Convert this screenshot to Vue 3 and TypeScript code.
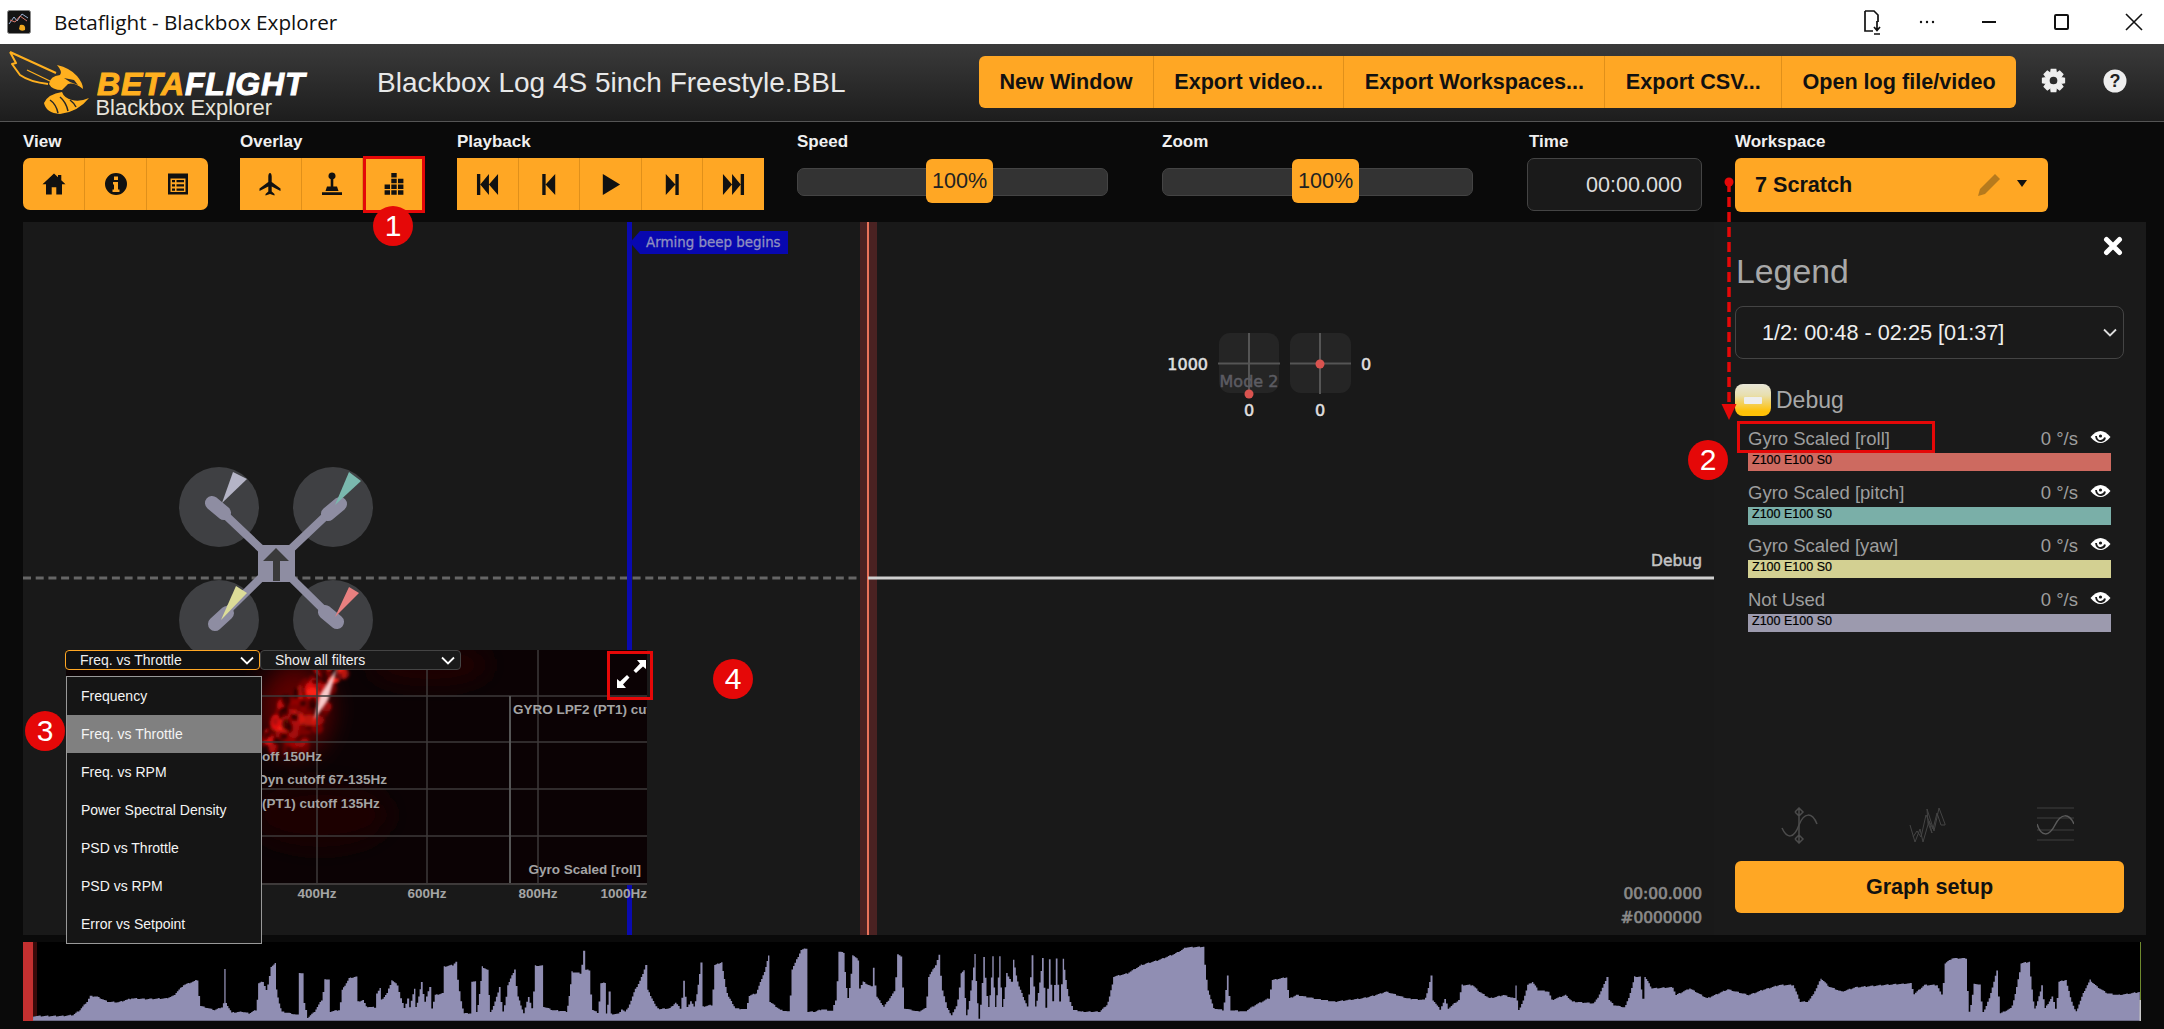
<script setup lang="ts">
const icons: Record<string, string> = {
  home: 'M12 1.500 L16 5.200 V3 H19.300 V8.200 L23.500 12.200 H20 V22.500 H14.300 V15.300 H9.700 V22.500 H4 V12.200 H0.500 Z',
  info: 'M12 1a11 11 0 1 0 0 22a11 11 0 0 0 0-22Z M10 4.500h4v3.500h-4Z M9 10h5v7.500h1.500v2.500h-7v-2.500H10v-5H9Z',
  list: 'M2 1.500h20v21H2Z M4.500 6.500v13.500h15V6.500Z M6 8h3v2.300H6Z M10.500 8H18v2.300h-7.500Z M6 12.200h3v2.300H6Z M10.500 12.200H18v2.300h-7.500Z M6 16.400h3v2.300H6Z M10.500 16.400H18v2.300h-7.500Z',
  plane: 'M12 1C13 1 13.700 2.800 13.700 4.500V10L22.500 16.500V19L13.700 14.500V19.500L16.500 22V23.500L12 22L7.500 23.500V22L10.300 19.500V14.500L1.500 19V16.500L10.300 10V4.500C10.300 2.800 11 1 12 1Z',
  joystick: 'M12 0.500a3.500 3.500 0 0 1 1.300 6.750V14.500h3.700L18.500 19H5.500L7 14.500h3.700V7.250A3.500 3.500 0 0 1 12 0.500Z M2 20.300h20V23H2Z',
  grid: 'M9.300 1h5.400v4.500H9.300Z M9.300 6.700h5.400v4.500H9.300Z M16 6.700h5.400v4.500H16Z M2.600 12.500h5.400V17H2.600Z M9.300 12.500h5.400V17H9.300Z M16 12.500h5.400V17H16Z M2.600 18.300h5.400v4.500H2.600Z M9.300 18.300h5.400v4.500H9.300Z M16 18.300h5.400v4.500H16Z',
  first: 'M1 1h3.500v22H1Z M4.500 12 13.500 1v22Z M13.500 12 23 1v22Z',
  prev: 'M5.500 1h3.500v22H5.500Z M9 12 19 1v22Z',
  play: 'M4 1 L22 12 L4 23Z',
  next: 'M15 1h3.500v22H15Z M15 12 5 1v22Z',
  last: 'M19.500 1H23v22h-3.500Z M19.500 12 10.500 1v22Z M10.500 12 1 1v22Z'
}

const views = ['home', 'info', 'list']
const overlays = ['plane', 'joystick', 'grid']
const playback = ['first', 'prev', 'play', 'next', 'last']
const headerButtons = ['New Window', 'Export video...', 'Export Workspaces...', 'Export CSV...', 'Open log file/video']

function gearPath(): string {
  const pts: string[] = []
  const teeth = 8
  for (let i = 0; i < teeth; i++) {
    const a = (i / teeth) * Math.PI * 2
    const w = 0.24
    const steps: [number, number][] = [
      [8.2, a - 0.42], [11.5, a - w], [11.5, a + w], [8.2, a + 0.42]
    ]
    for (const [r, t] of steps) {
      pts.push(`${(12 + r * Math.cos(t)).toFixed(2)} ${(12 + r * Math.sin(t)).toFixed(2)}`)
    }
  }
  return `M${pts.join('L')}Z M12 8.300a3.700 3.700 0 1 0 0 7.400a3.700 3.700 0 0 0 0-7.400Z`
}
const gear = gearPath()

const rows = [
  { name: 'Gyro Scaled [roll]', color: '#cd6a60' },
  { name: 'Gyro Scaled [pitch]', color: '#7aafa8' },
  { name: 'Gyro Scaled [yaw]', color: '#d3d092' },
  { name: 'Not Used', color: '#9c9aae' }
]

const menu = ['Frequency', 'Freq. vs Throttle', 'Freq. vs RPM', 'Power Spectral Density', 'PSD vs Throttle', 'PSD vs RPM', 'Error vs Setpoint']

const traceA = [48,258,90,258,105,255,115,240,125,215,130,198,140,200,155,215,170,217,190,205,210,207,240,205,250,198,265,165,285,150,290,228,310,240,320,232,323,220,325,118,327,220,335,248,350,245,360,250,370,240,374,160,380,155,385,180,392,110,398,100,400,180,408,245,420,250,430,255,433,128,438,130,440,220,445,263,455,245,465,210,470,148,475,150,478,245,490,240,495,180,505,145,515,140,518,215,525,210,530,230,542,232,545,190,550,175,552,210,560,190,567,150,575,165,580,205,585,235,590,205,593,232,600,175,602,230,610,155,615,215,622,170,625,235,630,195,640,190,643,110,655,105,660,95,665,185,672,250,680,250,683,155,688,155,690,245,698,110,706,120,710,245,723,170,728,245,735,165,745,118,750,200,758,250,765,200,770,235,775,107,785,107,787,230,800,240,820,245,828,125,840,130,845,62,848,120,853,120,858,240,865,248,870,160,876,158,878,250,882,185,885,252,895,252,900,238,905,245,920,175,935,105,938,180,950,230,955,237,970,235,978,218,985,235,990,152,995,232,1000,213,1005,230,1015,98,1018,230,1030,225,1035,105,1045,97,1055,200,1065,235,1080,238,1085,197,1095,190,1105,135,1113,75,1115,215,1130,240,1142,245,1147,118,1160,60,1167,55,1170,245,1180,245,1190,238,1205,243,1210,210,1215,65,1222,68,1228,205,1235,75,1243,90,1245,175,1250,155,1262,170,1265,112,1270,200,1280,230,1295,185,1300,72,1305,80,1310,235,1330,245,1340,235,1345,140,1355,105,1360,75,1365,180,1372,235,1378,255,1385,230,1392,130,1396,122,1400,255,1412,72,1418,265,1425,82,1432,230,1438,80,1442,230,1448,80,1452,230,1458,130,1465,155,1468,90,1478,180,1488,230,1495,75,1500,230,1510,85,1515,232,1520,88,1525,215,1530,85,1535,215,1540,85,1550,215,1555,240,1568,245]
const traceB = [0,245,25,245,35,225,45,140,65,130,85,105,110,90,135,70,150,52,175,50,182,180,190,235,203,240,210,137,215,240,235,245,250,225,270,205,275,150,295,142,300,205,310,195,340,207,365,215,405,205,420,198,440,185,470,205,495,210,505,138,508,210,518,238,525,208,530,235,545,210,550,165,565,165,575,185,590,205,610,195,625,205,628,165,632,240,645,165,652,155,660,180,675,185,680,210,700,195,710,215,740,220,760,140,763,210,770,225,785,232,800,140,808,140,812,205,815,140,825,175,855,172,860,195,880,175,905,205,935,178,965,195,985,180,1010,165,1030,165,1040,215,1050,215,1070,145,1082,170,1100,185,1120,172,1160,165,1200,160,1205,192,1220,165,1238,165,1245,195,1250,100,1260,85,1280,85,1285,245,1292,160,1300,165,1305,245,1325,120,1330,250,1345,235,1360,100,1372,95,1380,235,1390,165,1395,235,1405,200,1410,235,1415,155,1425,150,1440,245,1450,190,1460,150,1470,170,1485,190,1500,195,1520,190,1533,185]

function buildTrace(): string {
  const s = 1082 / 1568
  const p: [number, number][] = []
  for (let i = 0; i < traceA.length; i += 2) p.push([traceA[i] * s, traceA[i + 1] / 3 + 930])
  for (let i = 0; i < traceB.length; i += 2) p.push([1082 + traceB[i] * s, traceB[i + 1] / 3 + 930])
  const out: string[] = ['33 1020.700']
  let count = 0
  for (let i = 0; i < p.length - 1; i++) {
    const [x0, y0] = p[i]
    const [x1, y1] = p[i + 1]
    const dx = x1 - x0
    const dy = y1 - y0
    const n = Math.max(1, Math.round(dx / 1.5))
    for (let k = 0; k < n; k++) {
      const t = k / n
      let e = t
      if (Math.abs(dy) >= 20) e = dy < 0 ? Math.pow(t, 1.35) : 1 - Math.pow(1 - t, 1.35)
      count++
      const wobble = (((count * 7919) % 5) - 2) * 0.22
      const y = Math.min(1020.7, y0 + dy * e + wobble)
      const xa = x0 + dx * t
      const xb = xa + dx / n
      out.push(`${xa.toFixed(1)} ${y.toFixed(1)}`, `${xb.toFixed(1)} ${y.toFixed(1)}`)
    }
  }
  out.push('2140 1020.700')
  return out.join(' ')
}
const tracePoints = buildTrace()

interface Blot { x: number; y: number; rx: number; ry: number; fill: string; op: number }
function buildBlots(): Blot[] {
  let seed = 4242
  const rnd = () => {
    seed = (seed * 16807) % 2147483647
    return seed / 2147483647
  }
  const out: Blot[] = []
  const reds = ['#e01010', '#a80808', '#ff2418', '#7c0606']
  for (let i = 0; i < 90; i++) {
    const t = rnd()
    const spread = 32 * (1 - t * 0.72)
    const x = 272 + t * 76 + (rnd() - 0.5) * spread * 2
    const y = 752 - t * 104 + (rnd() - 0.5) * 16
    out.push({ x, y, rx: 2 + rnd() * 5, ry: 2.500 + rnd() * 6, fill: reds[Math.floor(rnd() * reds.length)], op: 0.45 + rnd() * 0.55 })
  }
  for (let i = 0; i < 22; i++) {
    const t = rnd()
    out.push({ x: 266 + t * 70 + (rnd() - 0.5) * 30, y: 745 - t * 90, rx: 2 + rnd() * 3, ry: 2 + rnd() * 4, fill: '#1c0000', op: 0.7 })
  }
  return out
}
const blots = buildBlots()
</script>

<template>
  <div class="page">
    <div class="titlebar">
      <svg class="app-icon" viewBox="0 0 24 24">
        <rect x="0.500" y="0.500" width="23" height="23" rx="2" fill="#141414" stroke="#888" />
        <path d="M2 14 L7 7 L10 11 L15 4 L21 8" fill="none" stroke="#9fb4d8" stroke-width="1" />
        <path d="M3 10 L8 12 L13 6 L20 11" fill="none" stroke="#d8786a" stroke-width="1" />
        <path d="M13 15 Q19 14 18 20 Q14 22 12 19 Z" fill="#f2a91f" />
      </svg>
      <span class="app-title">Betaflight - Blackbox Explorer</span>
      <div class="win-controls">
        <svg class="win-doc" viewBox="0 0 20 26" width="20" height="26">
          <path d="M3 2h9l4 4v7M3 2v20h8" fill="none" stroke="#111" stroke-width="1.700" />
          <path d="M15 12v9M12 18l3 3.500 3-3.500M12 25h6" fill="none" stroke="#111" stroke-width="1.700" />
        </svg>
        <svg class="win-dots" viewBox="0 0 16 4" width="16" height="4">
          <circle cx="2" cy="2" r="1.200" fill="#111" /><circle cx="8" cy="2" r="1.200" fill="#111" /><circle cx="14" cy="2" r="1.200" fill="#111" />
        </svg>
        <span class="win-min"></span>
        <span class="win-max"></span>
        <svg class="win-close" viewBox="0 0 18 18" width="18" height="18">
          <path d="M1 1L17 17M17 1L1 17" stroke="#111" stroke-width="1.600" />
        </svg>
      </div>
    </div>

    <header class="header">
      <svg class="logo" viewBox="0 44 340 78" width="340" height="78">
        <g fill="none" stroke="#ffb01f" stroke-width="2" stroke-linejoin="round">
          <path d="M10 52 L56 73 M10 52 L16 63 L12 64 L20 75 Q30 82 48 84" />
          <path d="M27 70 L52 82" stroke-width="1.300" />
        </g>
        <path d="M57 65 Q70 68 77 76 Q83 83 83 89 Q74 82 68 84 L62 90 Q52 90 49 84 Q50 76 60 75 Q63 72 57 65Z" fill="#ffb01f" />
        <path d="M64 78 L74 80 L78 85 L70 82 Z" fill="#2a2a2a" />
        <path d="M62 92 Q48 94 44 103 Q46 113 60 114 Q78 112 89 98 Q80 102 72 100 Q64 98 62 92Z" fill="#ffb01f" />
        <path d="M50 100 Q56 104 58 113 M60 97 Q66 102 68 111 M70 100 Q74 103 76 107" fill="none" stroke="#262626" stroke-width="1.500" />
        <text x="97" y="95" class="logo-word"><tspan fill="#ffb01f">BETA</tspan><tspan fill="#fff">FLIGHT</tspan></text>
        <text x="95.500" y="115" class="logo-sub">Blackbox Explorer</text>
      </svg>
      <h1 class="log-title">Blackbox Log 4S 5inch Freestyle.BBL</h1>
      <div class="header-buttons">
        <button v-for="b in headerButtons" :key="b" class="header-btn">{{ b }}</button>
      </div>
      <svg class="gear" viewBox="0 0 24 24" width="25" height="25"><path :d="gear" fill="#eee" fill-rule="evenodd" /></svg>
      <svg class="help" viewBox="0 0 24 24" width="24" height="24">
        <circle cx="12" cy="12" r="11.500" fill="#eee" />
        <text x="12" y="18" text-anchor="middle" class="help-mark">?</text>
      </svg>
    </header>

    <section class="toolbar">
      <div class="tool view-tool">
        <label class="tool-label">View</label>
        <div class="btn-group rounded">
          <button v-for="i in views" :key="i" class="icon-btn">
            <svg viewBox="0 0 24 24" width="24" height="24"><path :d="icons[i]" fill="#111" fill-rule="evenodd" /></svg>
          </button>
        </div>
      </div>
      <div class="tool overlay-tool">
        <label class="tool-label">Overlay</label>
        <div class="btn-group">
          <button v-for="i in overlays" :key="i" class="icon-btn">
            <svg viewBox="0 0 24 24" width="24" height="24"><path :d="icons[i]" fill="#111" fill-rule="evenodd" /></svg>
          </button>
        </div>
      </div>
      <div class="tool playback-tool">
        <label class="tool-label">Playback</label>
        <div class="btn-group">
          <button v-for="i in playback" :key="i" class="icon-btn">
            <svg viewBox="0 0 24 24" width="23" height="23"><path :d="icons[i]" fill="#111" fill-rule="evenodd" /></svg>
          </button>
        </div>
      </div>
      <div class="tool slider-tool speed-tool">
        <label class="tool-label">Speed</label>
        <div class="slider"><span class="slider-handle">100%</span></div>
      </div>
      <div class="tool slider-tool zoom-tool">
        <label class="tool-label">Zoom</label>
        <div class="slider"><span class="slider-handle">100%</span></div>
      </div>
      <div class="tool time-tool">
        <label class="tool-label time-label">Time</label>
        <div class="time-box">00:00.000</div>
      </div>
      <div class="tool workspace-tool">
        <label class="tool-label">Workspace</label>
        <div class="workspace-btn">
          <span class="ws-name">7 Scratch</span>
          <svg class="ws-pencil" viewBox="0 0 24 24" width="24" height="24">
            <path d="M18 1 L23 6 L8 21 L1 23 L3 16 Z" fill="#b67a1d" />
          </svg>
          <span class="ws-caret"></span>
        </div>
      </div>
    </section>

    <main class="main">
      <div class="stage">
        <svg class="stage-svg" viewBox="23 222 1691 713" width="1691" height="713">
          <line x1="23" y1="578" x2="860" y2="578" stroke="#666" stroke-width="3" stroke-dasharray="8 4.700" />
          <rect x="860" y="222" width="17" height="713" fill="#4a2222" />
          <rect x="867" y="222" width="2" height="713" fill="#e8735a" />
          <line x1="868" y1="578" x2="1714" y2="578" stroke="#cfcfcf" stroke-width="3" />
          <text x="1702" y="566" text-anchor="end" class="stage-label dim">Debug</text>

          <rect x="627" y="222" width="5" height="713" fill="#0a0ab0" />
          <path d="M630 242.500 L640 231 H788 V254 H640 Z" fill="#0808b0" />
          <text x="646" y="247" class="beep-label">Arming beep begins</text>

          <!-- craft -->
          <g fill="#3f4043">
            <circle cx="219" cy="507" r="40" /><circle cx="333" cy="507" r="40" />
            <circle cx="219" cy="620" r="40" /><circle cx="333" cy="620" r="40" />
          </g>
          <g stroke="#8e8da2" stroke-linecap="round">
            <path d="M218 508 L276 563 L334 508 M218 620 L276 563 L334 620" fill="none" stroke-width="8" />
            <path d="M212 503 L224 513 M340 504 L328 514 M215 624 L227 613 M337 622 L325 612" stroke-width="14" />
          </g>
          <rect x="258" y="545" width="37" height="37" fill="#8e8da2" />
          <path d="M276 548 L289 561 H280 V581 H273 V561 H263 Z" fill="#3a3a3a" />
          <path d="M222 503 L233 472 L247 479 Z" fill="#b4b4c6" />
          <path d="M335 505 L349 472 L361 481 Z" fill="#7ab8ae" />
          <path d="M221 620 L236 586 L247 593 Z" fill="#dcdc98" />
          <path d="M335 617 L349 587 L359 593 Z" fill="#e88080" />

          <!-- sticks -->
          <rect x="1219" y="333" width="60" height="60" rx="11" fill="#252525" />
          <rect x="1290" y="333" width="61" height="60" rx="11" fill="#252525" />
          <g stroke="#555" stroke-width="2">
            <line x1="1218" y1="363.500" x2="1280" y2="363.500" /><line x1="1249" y1="333" x2="1249" y2="394" />
            <line x1="1290" y1="363.500" x2="1351" y2="363.500" /><line x1="1320" y1="333" x2="1320" y2="394" />
          </g>
          <text x="1249" y="387" text-anchor="middle" class="stage-label mode">Mode 2</text>
          <circle cx="1249" cy="394" r="4.500" fill="#d9534f" />
          <circle cx="1320" cy="364" r="4.500" fill="#d9534f" />
          <text x="1208" y="370" text-anchor="end" class="stage-label">1000</text>
          <text x="1366" y="370" text-anchor="middle" class="stage-label">0</text>
          <text x="1249" y="416" text-anchor="middle" class="stage-label">0</text>
          <text x="1320" y="416" text-anchor="middle" class="stage-label">0</text>

          <text x="1702" y="899" text-anchor="end" class="stage-label time">00:00.000</text>
          <text x="1702" y="923" text-anchor="end" class="stage-label time">#0000000</text>

          <!-- analyser -->
          <defs>
            <filter id="blurL" x="-50%" y="-50%" width="200%" height="200%"><feGaussianBlur stdDeviation="12" /></filter>
            <filter id="blurM" x="-50%" y="-50%" width="200%" height="200%"><feGaussianBlur stdDeviation="4" /></filter>
            <filter id="blurS" x="-20%" y="-20%" width="140%" height="140%"><feGaussianBlur stdDeviation="1.500" /></filter>
            <clipPath id="spectrum"><rect x="66" y="650" width="581" height="233" /></clipPath>
          </defs>
          <g clip-path="url(#spectrum)">
            <rect x="66" y="650" width="581" height="233" fill="#0b0204" />
            <ellipse cx="295" cy="710" rx="36" ry="46" fill="#5c0000" filter="url(#blurL)" />
            <ellipse cx="320" cy="815" rx="70" ry="32" fill="#1f0000" filter="url(#blurL)" />
            <ellipse cx="430" cy="665" rx="60" ry="18" fill="#200000" filter="url(#blurL)" />
            <g filter="url(#blurS)">
              <ellipse v-for="(b, i) in blots" :key="i" :cx="b.x" :cy="b.y" :rx="b.rx" :ry="b.ry" :fill="b.fill" :opacity="b.op" />
            </g>
            <path d="M314 720 L320 695 L337 668 L328 700 Z" fill="#f8caca" filter="url(#blurS)" />
            <g stroke="#3e3a3a" stroke-width="1.500">
              <line x1="262" y1="696" x2="647" y2="696" /><line x1="262" y1="742" x2="647" y2="742" />
              <line x1="262" y1="789" x2="647" y2="789" /><line x1="262" y1="836" x2="647" y2="836" />
              <line x1="317" y1="650" x2="317" y2="883" /><line x1="427" y1="650" x2="427" y2="883" />
              <line x1="538" y1="650" x2="538" y2="883" />
            </g>
            <line x1="510" y1="696" x2="510" y2="883" stroke="#555" stroke-width="2" />
            <text x="513" y="714" class="spec-label">GYRO LPF2 (PT1) cutoff</text>
            <text x="262" y="761" class="spec-label">off 150Hz</text>
            <text x="258" y="784" class="spec-label">Dyn cutoff 67-135Hz</text>
            <text x="262" y="808" class="spec-label">(PT1) cutoff 135Hz</text>
            <text x="641" y="874" text-anchor="end" class="spec-label">Gyro Scaled [roll]</text>
          </g>
          <rect x="66" y="883" width="581" height="2" fill="#3e3a3a" />
          <rect x="627" y="885" width="5" height="50" fill="#0a0ab0" />
          <text x="317" y="898" text-anchor="middle" class="spec-label">400Hz</text>
          <text x="427" y="898" text-anchor="middle" class="spec-label">600Hz</text>
          <text x="538" y="898" text-anchor="middle" class="spec-label">800Hz</text>
          <text x="647" y="898" text-anchor="end" class="spec-label">1000Hz</text>
          <path d="M637 660 H646 V669 L643 666.500 L636 673 L633.500 670.500 L640 663.500 Z M617 688 V679 L620 681.500 L627 675 L629.500 677.500 L623 684.500 L626 688 Z" fill="#fff" />
        </svg>

        <div class="spec-selects">
          <div class="spec-select active">
            <span>Freq. vs Throttle</span>
            <svg viewBox="0 0 14 9" width="14" height="9"><path d="M1 1.500L7 7.500L13 1.500" fill="none" stroke="#fff" stroke-width="1.800" /></svg>
          </div>
          <div class="spec-select">
            <span>Show all filters</span>
            <svg viewBox="0 0 14 9" width="14" height="9"><path d="M1 1.500L7 7.500L13 1.500" fill="none" stroke="#fff" stroke-width="1.800" /></svg>
          </div>
        </div>
        <ul class="spec-menu">
          <li v-for="m in menu" :key="m" class="spec-item" :class="{ selected: m === 'Freq. vs Throttle' }">{{ m }}</li>
        </ul>
      </div>

      <aside class="legend">
        <svg class="legend-close" viewBox="0 0 20 20" width="20" height="20">
          <path d="M3.500 3.500L16.500 16.500M16.500 3.500L3.500 16.500" stroke="#fff" stroke-width="5" stroke-linecap="round" />
        </svg>
        <h2 class="legend-title">Legend</h2>
        <div class="legend-select">
          <span>1/2: 00:48 - 02:25 [01:37]</span>
          <svg viewBox="0 0 14 9" width="14" height="9"><path d="M1 1.500L7 7.500L13 1.500" fill="none" stroke="#ddd" stroke-width="1.800" /></svg>
        </div>
        <div class="legend-group">
          <span class="group-icon"><span class="group-icon-bar"></span></span>
          <span class="group-name">Debug</span>
        </div>
        <div class="legend-rows">
          <div v-for="r in rows" :key="r.name" class="legend-row">
            <div class="row-head">
              <span class="row-name">{{ r.name }}</span>
              <span class="row-value">0 °/s</span>
              <svg class="row-eye" viewBox="0 0 21 14" width="21" height="14">
                <path d="M0.500 7 Q10.500 -5 20.500 7 Q10.500 19 0.500 7Z" fill="#fff" />
                <path d="M6 6 Q6.500 11 11 11 Q14.500 10.500 15 7.500" fill="none" stroke="#191919" stroke-width="1.800" />
                <circle cx="10.500" cy="6" r="1.600" fill="#191919" />
              </svg>
            </div>
            <div class="row-bar" :style="{ background: r.color }">Z100 E100 S0</div>
          </div>
        </div>
        <div class="legend-tools">
          <svg viewBox="0 0 37 37" width="37" height="37" fill="none" stroke="#4c4c4c" stroke-width="1.500">
            <path d="M1 21 C6 32 13 32 18 18 C23 5 31 5 36 17" />
            <path d="M18 1V36 M14 5L18 1L22 5L18 9L14 5 M14 32L18 36L22 32L18 28L14 32" />
          </svg>
          <svg viewBox="0 0 37 37" width="37" height="37" fill="none" stroke="#444" stroke-width="1">
            <path d="M1 18 L6 35 L11 22 L14 35 L20 14 L23 26 L19 16 L18 2 L25 24 L30 1 L36 17 L36 18 L32 18 L28 6 L24 22 L17 8 L12 30 L8 24 L4 30" />
          </svg>
          <svg viewBox="0 0 37 37" width="37" height="37" fill="none" stroke="#3f3f3f" stroke-width="1.200">
            <path d="M0 1H37 M0 11H37 M0 23H37 M0 33H37" />
            <path d="M0 17 C4 30 12 30 18 18 C24 6 32 6 37 17" stroke="#5a5a5a" stroke-width="1.500" />
          </svg>
        </div>
        <button class="graph-setup">Graph setup</button>
      </aside>
    </main>

    <div class="seek">
      <svg viewBox="23 942 2118 79" width="2118" height="79">
        <polygon :points="tracePoints" fill="#908eb3" />
        <rect x="23" y="942" width="10" height="79" fill="#c43030" />
        <rect x="33" y="942" width="4" height="74" fill="#3a0a0a" />
        <rect x="2140" y="942" width="1.500" height="58" fill="#6f8a2e" />
        <rect x="2139.500" y="1000" width="1.500" height="21" fill="#c8c8c8" />
      </svg>
    </div>

    <!-- annotations -->
    <svg class="notes" viewBox="0 0 2164 1029" width="2164" height="1029">
      <circle cx="1729" cy="182" r="4.500" fill="#e50808" />
      <line x1="1729" y1="182" x2="1729" y2="406" stroke="#e50808" stroke-width="3.500" stroke-dasharray="10 5" />
      <path d="M1721.500 404 H1736.500 L1729 420 Z" fill="#e50808" />
    </svg>
    <div class="note-box box-1"></div>
    <div class="note-box box-2"></div>
    <div class="note-box box-4"></div>
    <span class="badge badge-1">1</span>
    <span class="badge badge-2">2</span>
    <span class="badge badge-3">3</span>
    <span class="badge badge-4">4</span>
  </div>
</template>

<style scoped>
.page {
  position: relative;
  width: 2164px;
  height: 1029px;
  overflow: hidden;
  background: #0a0a0a;
  display: flex;
  flex-direction: column;
  font-family: "Liberation Sans", Arial, sans-serif;
  color: #eee;
}

.titlebar {
  height: 44px;
  flex: none;
  display: flex;
  align-items: center;
  background: #fff;
  padding-left: 7px;
}
.app-icon { width: 24px; height: 24px; margin-right: 23px; }
.app-title {
  font-family: "Open Sans", sans-serif;
  font-size: 20.700px;
  color: #111;
}
.win-controls {
  margin-left: auto;
  width: 310px;
  height: 44px;
  display: flex;
  align-items: center;
}
.win-doc { margin-left: 8px; }
.win-dots { margin-left: 37px; }
.win-min { width: 14px; height: 2px; background: #111; margin-left: 47px; }
.win-max { width: 15px; height: 16px; border: 2px solid #111; border-radius: 2px; margin-left: 58px; box-sizing: border-box; }
.win-close { margin-left: 56px; }

.header {
  height: 78px;
  flex: none;
  box-sizing: border-box;
  display: flex;
  align-items: center;
  background: linear-gradient(#3a3a3a, #1d1d1d);
  border-bottom: 1px solid #555;
}
.logo { flex: none; margin-right: 37px; }
.logo-word {
  font-family: "Liberation Sans", sans-serif;
  font-weight: 700;
  font-style: italic;
  font-size: 32px;
  letter-spacing: 0.800px;
}
.logo-word tspan:first-child { stroke: #ffb01f; stroke-width: 1px; }
.logo-word tspan:last-child { stroke: #fff; stroke-width: 1px; }
.logo-sub {
  font-family: "Liberation Sans", sans-serif;
  font-size: 21.900px;
  fill: #e8e5dc;
}
.log-title {
  margin: 0;
  font-size: 28px;
  font-weight: 400;
  color: #e8e8e8;
  white-space: nowrap;
}
.header-buttons {
  margin-left: auto;
  display: flex;
  height: 52px;
  border-radius: 6px;
  overflow: hidden;
  margin-bottom: 1px;
}
.header-btn {
  border: 0;
  border-left: 1px solid #e0901a;
  background: #ffa724;
  color: #111;
  font: 700 21.600px "Liberation Sans", sans-serif;
  padding: 0 20.400px;
  white-space: nowrap;
}
.header-btn:first-child { border-left: 0; }
.gear { margin-left: 25px; margin-bottom: 4px; flex: none; }
.help { margin-left: 37px; margin-right: 37px; margin-bottom: 4px; flex: none; }
.help-mark {
  font: 700 18px "Liberation Sans", sans-serif;
  fill: #222;
}

.toolbar {
  height: 100px;
  flex: none;
  box-sizing: border-box;
  padding: 10px 0 0 23px;
  display: flex;
  align-items: flex-start;
  background: #0a0a0a;
}
.tool { display: flex; flex-direction: column; flex: none; }
.tool-label {
  height: 20px;
  line-height: 20px;
  margin-bottom: 6px;
  font-size: 17px;
  font-weight: 700;
  color: #f0f0f0;
}
.time-label { padding-left: 2px; }
.view-tool { width: 185px; }
.overlay-tool { width: 184px; margin-left: 32px; }
.playback-tool { width: 307px; margin-left: 33px; }
.speed-tool { width: 311px; margin-left: 33px; }
.zoom-tool { width: 311px; margin-left: 54px; }
.time-tool { width: 175px; margin-left: 54px; }
.workspace-tool { width: 313px; margin-left: 33px; }
.btn-group { display: flex; height: 52px; overflow: hidden; }
.btn-group.rounded { border-radius: 7px; }
.icon-btn {
  flex: 1;
  border: 0;
  border-left: 1px solid #e0901a;
  background: #ffa724;
  padding: 0;
  display: flex;
  align-items: center;
  justify-content: center;
}
.icon-btn:first-child { border-left: 0; }
.slider {
  position: relative;
  height: 28px;
  margin-top: 10px;
  box-sizing: border-box;
  background: #333;
  border: 1px solid #444;
  border-radius: 7px;
}
.slider-handle {
  position: absolute;
  left: 128px;
  top: -10px;
  width: 67px;
  height: 44px;
  border-radius: 6px;
  background: #ffa724;
  color: #222;
  font-size: 21.600px;
  line-height: 44px;
  text-align: center;
}
.zoom-tool .slider-handle { left: 129px; }
.time-box {
  height: 53px;
  box-sizing: border-box;
  background: #1a1a1a;
  border: 1px solid #444;
  border-radius: 7px;
  padding-right: 19px;
  text-align: right;
  font-size: 21.600px;
  line-height: 51px;
  color: #ddd;
}
.workspace-btn {
  height: 54px;
  display: flex;
  align-items: center;
  background: #ffa724;
  border-radius: 6px;
  padding-left: 20px;
  color: #111;
}
.ws-name { font-size: 21.600px; font-weight: 700; }
.ws-pencil { margin-left: auto; margin-right: -4px; }
.ws-caret {
  width: 0;
  height: 0;
  border-left: 5.500px solid transparent;
  border-right: 5.500px solid transparent;
  border-top: 7px solid #111;
  margin: -4px 21px 0 20px;
}

.main {
  height: 713px;
  flex: none;
  margin-left: 23px;
  width: 2123px;
  display: flex;
  background: #191919;
}
.stage { position: relative; width: 1691px; flex: none; }
.stage-svg { position: absolute; left: 0; top: 0; display: block; overflow: visible; }
.stage-label {
  font-family: "DejaVu Sans", sans-serif;
  font-size: 16px;
  fill: #e0e0e0;
  stroke: #e0e0e0;
  stroke-width: 0.500px;
}
.stage-label.dim { font-size: 15.500px; fill: #c4c4c4; stroke: #c4c4c4; }
.stage-label.mode { fill: #5c5c62; stroke: #5c5c62; }
.stage-label.time { fill: #8a8a8a; stroke: #8a8a8a; stroke-width: 0.700px; font-size: 15.400px; }
.beep-label {
  font-family: "DejaVu Sans", sans-serif;
  font-size: 13.400px;
  fill: #8f8fc0;
  stroke: #8f8fc0;
  stroke-width: 0.300px;
}
.spec-label {
  font-family: "Liberation Sans", sans-serif;
  font-size: 13.500px;
  font-weight: 700;
  fill: #a4a4a4;
}
.spec-selects {
  position: absolute;
  left: 42px;
  top: 428px;
  display: flex;
}
.spec-select {
  box-sizing: border-box;
  width: 196px;
  height: 20px;
  padding: 0 5px 0 14px;
  display: flex;
  align-items: center;
  justify-content: space-between;
  background: #1a1a1a;
  border: 1px solid #444;
  border-radius: 4px;
  font-size: 14px;
  color: #f0f0f0;
}
.spec-select.active { width: 195px; border-color: #ffa724; background: #111; }
.spec-select + .spec-select { width: 201px; }
.spec-menu {
  position: absolute;
  left: 43px;
  top: 454px;
  z-index: 2;
  width: 196px;
  margin: 0;
  padding: 0;
  box-sizing: border-box;
  list-style: none;
  background: #151515;
  border: 1px solid #999;
}
.spec-item {
  height: 38px;
  line-height: 38px;
  padding-left: 14px;
  font-size: 14px;
  color: #f4f4f4;
}
.spec-item.selected { background: #808080; }

.legend {
  position: relative;
  flex: 1;
  box-sizing: border-box;
  padding: 0 22px 22px 21px;
  display: flex;
  flex-direction: column;
  background: #1a1a1a;
}
.legend-close { position: absolute; left: 389px; top: 14px; }
.legend-title {
  margin: 29px 0 0 1px;
  height: 40px;
  line-height: 40px;
  font-size: 33.800px;
  font-weight: 400;
  color: #a8a8a8;
}
.legend-select {
  margin-top: 15px;
  height: 53px;
  box-sizing: border-box;
  border: 1px solid #444;
  border-radius: 8px;
  padding: 0 6px 0 26px;
  display: flex;
  align-items: center;
  justify-content: space-between;
  font-size: 21.700px;
  color: #eee;
}
.legend-group {
  margin-top: 25px;
  height: 32px;
  display: flex;
  align-items: center;
  gap: 5px;
}
.group-icon {
  width: 36px;
  height: 32px;
  border-radius: 8px;
  display: flex;
  align-items: center;
  justify-content: center;
  background: linear-gradient(#e8e6d8 0%, #e8dfae 35%, #ffc107 85%);
}
.group-icon-bar { width: 18px; height: 7px; border-radius: 1px; background: #eee; }
.group-name { font-size: 23px; color: #a8a8a8; }
.legend-rows { margin: 5px 0 0 13px; width: 363px; }
.legend-row { height: 53.600px; }
.row-head {
  height: 32px;
  display: flex;
  align-items: flex-start;
  font-size: 18.500px;
  color: #9e9e9e;
}
.row-name { line-height: 36px; }
.row-value { margin-left: auto; line-height: 36px; }
.row-eye { margin: 9px 0 0 12px; }
.row-bar {
  height: 18px;
  line-height: 15px;
  padding-left: 4px;
  font-size: 12.500px;
  color: #000;
  -webkit-text-stroke: 0.200px #000;
}
.legend-tools {
  margin-top: auto;
  margin-bottom: 16px;
  display: grid;
  grid-template-columns: repeat(3, 128px);
  justify-items: center;
  align-items: center;
  height: 40px;
}
.graph-setup {
  height: 52px;
  border: 0;
  border-radius: 6px;
  background: #ffa724;
  color: #111;
  font: 700 21.600px "Liberation Sans", sans-serif;
}

.seek {
  margin: 7px 0 0 23px;
  width: 2118px;
  height: 79px;
  flex: none;
  background: #000;
}
.seek svg { display: block; }

.notes { position: absolute; left: 0; top: 0; pointer-events: none; }
.note-box {
  position: absolute;
  box-sizing: border-box;
  border: 3.500px solid #e50808;
  pointer-events: none;
}
.box-1 { left: 363px; top: 156px; width: 62px; height: 57px; }
.box-2 { left: 1737px; top: 421px; width: 198px; height: 32px; }
.box-4 { left: 607px; top: 651px; width: 46px; height: 49px; }
.badge {
  position: absolute;
  width: 40px;
  height: 40px;
  border-radius: 50%;
  background: #e50808;
  color: #fff;
  font-size: 30px;
  line-height: 40px;
  text-align: center;
}
.badge-1 { left: 373px; top: 206px; }
.badge-2 { left: 1688px; top: 440px; }
.badge-3 { left: 25px; top: 711px; }
.badge-4 { left: 713px; top: 659px; }
</style>
